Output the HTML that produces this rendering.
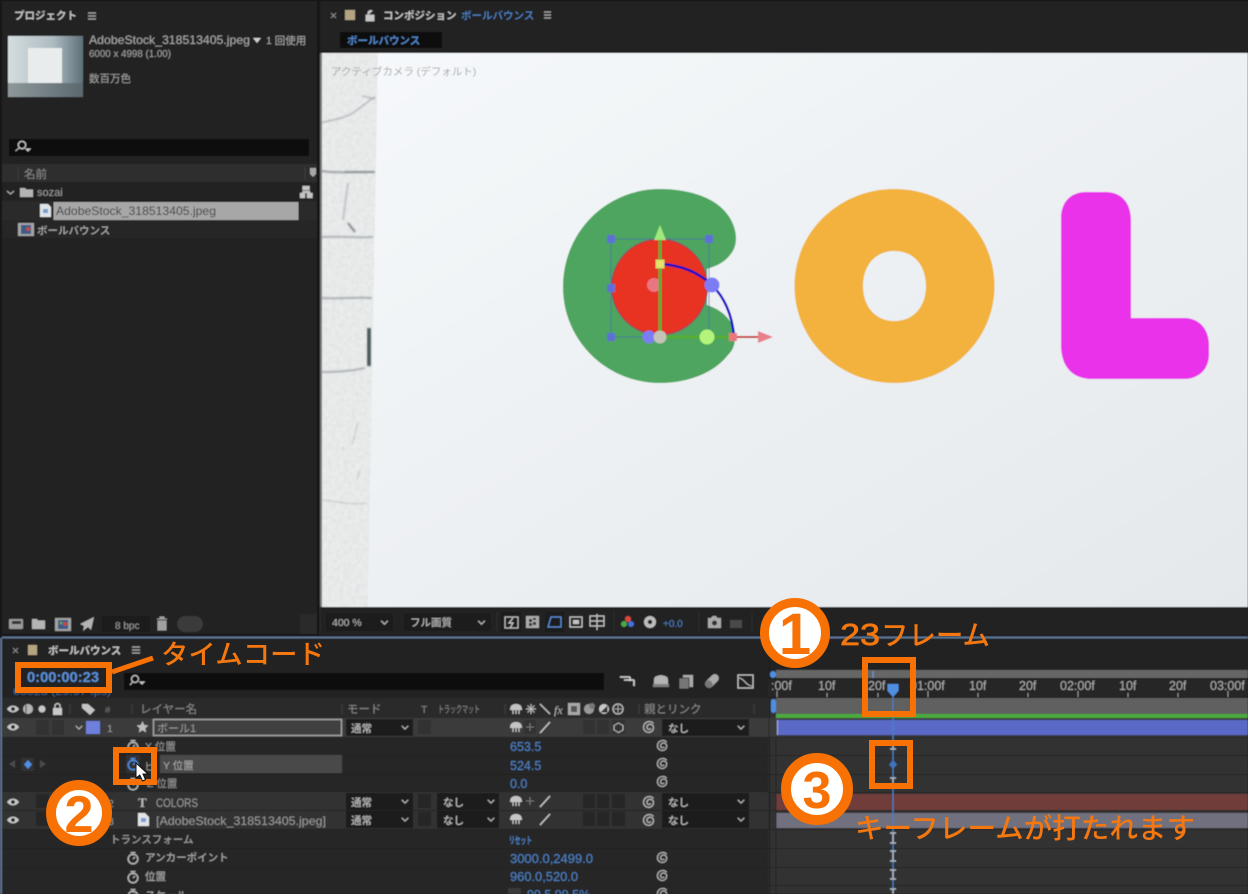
<!DOCTYPE html>
<html lang="ja"><head><meta charset="utf-8"><title>After Effects</title>
<style>
html,body{margin:0;padding:0;background:#1a1a1a;width:1248px;height:894px;overflow:hidden}
svg{display:block;position:absolute;left:0;top:0}
text{font-family:"Liberation Sans","Noto Sans CJK JP",sans-serif;fill:#9a9a9a;font-size:11px}
.j{font-size:10.5px}
.b{fill:#4f82c4}
.an{fill:#f4770f;font-weight:500;font-family:"Noto Sans CJK JP",sans-serif}
</style></head><body>
<svg width="1248" height="894" viewBox="0 0 1248 894" xmlns="http://www.w3.org/2000/svg">
<defs>
<filter id="bl" x="-2%" y="-2%" width="104%" height="104%"><feGaussianBlur stdDeviation="0.45"/></filter>
<filter id="bl2" x="-10%" y="-10%" width="120%" height="120%"><feGaussianBlur stdDeviation="0.8"/></filter>
<filter id="noise" x="0" y="0" width="100%" height="100%"><feTurbulence type="fractalNoise" baseFrequency="0.25" numOctaves="3" seed="4"/><feColorMatrix values="0 0 0 0 0.58 0 0 0 0 0.6 0 0 0 0 0.61 0 0 0 .6 -.16"/><feGaussianBlur stdDeviation="0.5"/></filter>
<linearGradient id="thumb" x1="0" x2="1" y1="0" y2="0"><stop offset="0" stop-color="#d5dde0"/><stop offset=".6" stop-color="#aebcc1"/><stop offset="1" stop-color="#5d7078"/></linearGradient>
<linearGradient id="floor" x1="0" x2="1" y1="0" y2="0"><stop offset="0" stop-color="#8f999c"/><stop offset="1" stop-color="#5a686e"/></linearGradient>
<linearGradient id="wall" x1="0" y1="0" x2="1" y2="1"><stop offset="0" stop-color="#f6f9fb"/><stop offset="1" stop-color="#e4e8eb"/></linearGradient>
<symbol id="eye" viewBox="0 0 12 8" overflow="visible"><path d="M0 4C3 -.5 9 -.5 12 4C9 8.500 3 8.500 0 4Z" fill="#c8c8c8"/><circle cx="6" cy="4" r="1.900" fill="#222"/></symbol>
<symbol id="sw" viewBox="0 0 14 16" overflow="visible"><circle cx="7" cy="9" r="4.800" fill="none" stroke="currentColor" stroke-width="1.500"/><path d="M4.500 2.500H9.500M7 3V5.500M7 9L9 7" fill="none" stroke="currentColor" stroke-width="1.300"/></symbol>
<symbol id="sp" viewBox="0 0 14 14" overflow="visible"><path d="M11.500 3.500C9 .5 3.500 1 1.800 5.500C.5 10 4.500 13.500 8.500 12C12 10.500 12.500 6 9.500 4.500C7 3.500 4.500 5.500 5 8C5.500 9.800 8 10 8.800 8.300" fill="none" stroke="#b4b4b4" stroke-width="1.300"/></symbol>
<symbol id="ch" viewBox="0 0 10 6" overflow="visible"><path d="M1 1L5 5L9 1" fill="none" stroke="#b8b8b8" stroke-width="1.400"/></symbol>
<symbol id="solo" viewBox="0 0 14 12" overflow="visible"><path d="M1 7C1 2 4 1 7 1C10 1 13 2 13 7Z" fill="#c4c4c4"/><path d="M7 1V7M4 7V11M10 7V11M7 7V11" stroke="#c4c4c4" stroke-width="1.300"/></symbol>
</defs>

<g filter="url(#bl)">
<rect width="1248" height="894" fill="#151515"/>
<!-- project panel -->
<rect x="2" y="1" width="315" height="613" fill="#232323"/>
<text x="14" y="19" class="j" style="fill:#c4c4c4;font-weight:700">プロジェクト</text>
<path d="M88 13H96M88 16H96M88 19H96" stroke="#a8a8a8" stroke-width="1.200"/>
<rect x="8" y="36" width="75" height="61" fill="url(#thumb)"/>
<rect x="8" y="83" width="75" height="14" fill="url(#floor)"/>
<rect x="28" y="48" width="34" height="35" fill="#e8ecec"/>
<text x="89" y="44" textLength="161" lengthAdjust="spacingAndGlyphs" style="font-size:12px;fill:#a8a8a8">AdobeStock_318513405.jpeg</text>
<path d="M253 38H261L257 43Z" fill="#cfcfcf"/>
<text x="266" y="44" style="font-size:10.500px;fill:#a8a8a8">1 回使用</text>
<text x="89" y="57" textLength="82" lengthAdjust="spacingAndGlyphs" style="font-size:10px;fill:#a0a0a0">6000 x 4998 (1.00)</text>
<text x="89" y="82" style="font-size:10.500px;fill:#a0a0a0">数百万色</text>
<rect x="9" y="139" width="300" height="17" fill="#111"/>
<circle cx="22" cy="145" r="3.700" fill="none" stroke="#c4c4c4" stroke-width="1.300"/><path d="M19 148L15.500 151M26 149H30L28 151Z" stroke="#c4c4c4" fill="#c4c4c4"/>
<rect x="2" y="164" width="315" height="18" fill="#2e2e2e"/>
<path d="M18 167V180M305 167V180" stroke="#3e3e3e"/>
<text x="24" y="178" style="font-size:11.500px;fill:#8a8a8a">名前</text>
<path d="M310 168H316V174L313 177L310 174Z" fill="#a8a8a8"/>
<path d="M7 191L10.500 194L14 191" fill="none" stroke="#a8a8a8" stroke-width="1.200"/>
<path d="M20 188H25L26.500 189.500H33V197H20Z" fill="#b4b4b4"/>
<text x="37" y="196" style="font-size:11px;fill:#999">sozai</text>
<path d="M306 186L309.500 186V190H302.500V186Z M300 193H305V198H300Z M307 193H312.500V198H307Z M306 190V193M302.500 193V191H310V193" fill="#c4c4c4" stroke="#c4c4c4" stroke-width=".4"/>
<rect x="2" y="201" width="315" height="19" fill="#2b2b2b"/>
<rect x="53" y="201.500" width="246" height="19" fill="#a7a7a7" stroke="#111"/>
<path d="M40 204H48L51 207V217H40Z" fill="#dfe4e8"/><rect x="43" y="209" width="5" height="4" fill="#7c9ccc"/>
<text x="56" y="215" textLength="160" lengthAdjust="spacingAndGlyphs" style="font-size:12px;fill:#3d3d3d">AdobeStock_318513405.jpeg</text>
<rect x="2" y="220" width="315" height="18" fill="#272727"/>
<rect x="18" y="223" width="16" height="13" fill="#a3a3a3"/><rect x="21" y="225" width="10" height="9" fill="#3d5a88"/><circle cx="28" cy="229" r="2" fill="#c84a3c"/>
<text x="37" y="234" class="j" style="fill:#a8a8a8;font-weight:500">ボールバウンス</text>

<!-- project toolbar -->
<rect x="2" y="614" width="315" height="20" fill="#232323"/>
<rect x="300" y="614" width="17" height="20" fill="#2a2a2a"/>
<rect x="9" y="619" width="14" height="10" rx="1" fill="#9a9a9a"/><rect x="12" y="621" width="9" height="3" fill="#333"/>
<path d="M32 619H37L38 620.500H45V629H32Z" fill="#b4b4b4"/>
<rect x="55" y="618" width="16" height="13" fill="#a3a3a3"/><rect x="58" y="620" width="10" height="9" fill="#3d5a88"/><circle cx="65" cy="624" r="2" fill="#c84a3c"/><circle cx="61" cy="623" r="1.500" fill="#5fa75b"/>
<path d="M94 617L80 624L84 626L83 631L88 627L91 630Z" fill="#b4b4b4"/>
<rect x="102" y="616" width="48" height="16" fill="#1d1d1d"/>
<text x="115" y="629" style="font-size:10px;fill:#9a9a9a">8 bpc</text>
<path d="M157 619H167M158 621H166V630H158ZM160 619V617H164V619" fill="#a0a0a0" stroke="#a0a0a0"/>
<rect x="177" y="616" width="26" height="16" rx="8" fill="#3a3a3a"/>

<!-- comp header -->
<rect x="320" y="1" width="928" height="51" fill="#232323"/>
<path d="M331 13L336 18M336 13L331 18" stroke="#888" stroke-width="1.100"/>
<rect x="345" y="10" width="10" height="10" fill="#b5a482"/>
<path d="M366 15H374V21H366ZM368 15V12Q370 9.500 372.500 11" fill="#c8c8c8" stroke="#c8c8c8" stroke-width=".8"/>
<text x="383" y="19" class="j" style="fill:#c4c4c4;font-weight:700">コンポジション</text>
<text x="461" y="19" class="j b" style="font-weight:500">ボールバウンス</text>
<path d="M544 12H551M544 15H551M544 18H551" stroke="#a8a8a8" stroke-width="1.200"/>
<rect x="340" y="32" width="102" height="16" fill="#111"/>
<text x="347" y="44" class="j b" style="font-weight:700">ボールバウンス</text>

<!-- viewer -->
<rect x="320" y="53" width="928" height="554" fill="url(#wall)"/>
<path d="M321 53H378L368 607H321Z" fill="#eceeee"/>
<path d="M321 53H378V60L368 607H321Z" filter="url(#noise)" clip-path="polygon(0 0,100% 0,82% 100%,0 100%)"/>
<g fill="none" stroke="#6f797b" filter="url(#bl2)">
<path d="M320 123C332 120 345 118 353 113C360 108 368 101 375 97M362 96L375 99" stroke-width="1.100" opacity=".6"/>
<path d="M321 171C335 173 345 172 375 172" stroke-width="2" opacity=".65"/>
<path d="M345 172H374" stroke-width="2" opacity=".55"/>
<path d="M348 183L343 220" stroke-width="2" opacity=".35"/>
<path d="M348 223L355 232" stroke-width="2.200" opacity=".85"/>
<path d="M321 237C340 236 355 238 373 237" stroke-width="1.800" opacity=".55"/>
<path d="M321 298C340 299 355 297 372 298" stroke-width="1.800" opacity=".6"/>
<path d="M320 372C340 372 352 371 365 368" stroke-width="1.500" opacity=".65"/>
<path d="M358 422L352 445M342 447L344 449M360 470L357 480M322 500C340 502 350 505 367 503" stroke-width="1" opacity=".35"/>
</g>
<rect x="367" y="328" width="4" height="38" fill="#4a585c" filter="url(#bl2)"/>
<rect x="320" y="53" width="2" height="554" fill="#7a7a7a"/>
<text x="331" y="75" class="j" style="fill:#a6a6a6">アクティブカメラ (デフォルト)</text>

<!-- letters -->
<path d="M660 189C690 189 718 198 730 218C738 232 738 246 730 255C724 263 716 266 707 269L707 305C720 309 735 320 735 337C735 345 733 350 728 355C714 373 688 383 660 383C606 383 563 340 563 287C563 232 606 189 660 189Z" fill="#4ea55e"/>
<path fill-rule="evenodd" d="M894.500 189C950 189 994.500 232 994.500 286C994.500 340 950 383 894.500 383C839 383 794.500 340 794.500 286C794.500 232 839 189 894.500 189ZM894.500 251C874 251 863 267 863 286C863 305 874 321 894.500 321C915 321 926 305 926 286C926 267 915 251 894.500 251Z" fill="#f2b23e"/>
<path d="M1086 192H1105C1122 192 1131 203 1131 221V318H1184C1200 318 1209 330 1209 345V354C1209 370 1198 379 1184 379H1092C1072 379 1061 366 1061 345V218C1061 203 1070 192 1086 192Z" fill="#e932ea"/>

<!-- ball + handles -->
<circle cx="659.500" cy="287" r="48" fill="#e83022" stroke="#8a4a6a" stroke-width="1"/>
<rect x="611" y="239" width="98" height="98" fill="none" stroke="#4a70a8" stroke-width="1" opacity=".75"/>
<g fill="#5d6fd4"><rect x="607" y="235" width="8" height="8"/><rect x="705" y="235" width="8" height="8"/><rect x="607" y="284" width="8" height="8"/><rect x="607" y="333" width="8" height="8"/></g>
<circle cx="654" cy="285" r="7" fill="#ea7682"/>
<path d="M660 264C680 265 698 272 712 285C725 298 732 315 734 336" fill="none" stroke="#0d0dc4" stroke-width="2.500"/>
<path d="M660 237V337H732" fill="none" stroke="#57ad34" stroke-width="3"/>
<path d="M660 225L654 240H666Z" fill="#9fe87e"/>
<rect x="656" y="260" width="8" height="8" fill="#e9e06a" stroke="#c3d468"/>
<circle cx="712" cy="285" r="7.500" fill="#7c7cf5"/>
<circle cx="649" cy="337" r="6.500" fill="#7c7cf5"/>
<circle cx="660" cy="337" r="6.500" fill="#c3c3b8"/>
<circle cx="707" cy="337" r="7.500" fill="#b4f47c"/>
<rect x="729" y="333" width="8" height="8" fill="#e8787e"/>
<path d="M737 337H759" stroke="#c8302c" stroke-width="2"/>
<path d="M758 331L773 337L758 343Z" fill="#e8808a"/>

<!-- comp toolbar -->
<rect x="320" y="607" width="928" height="28" fill="#232323"/>
<rect x="326" y="613" width="67" height="18" rx="2" fill="#1d1d1d"/>
<text x="332" y="626" style="font-size:10.500px;fill:#b4b4b4">400 %</text>
<use href="#ch" x="380" y="620" width="9" height="5"/>
<rect x="404" y="613" width="87" height="18" rx="2" fill="#1d1d1d"/>
<text x="410" y="626" class="j" style="fill:#b4b4b4;font-weight:500">フル画質</text>
<use href="#ch" x="477" y="620" width="9" height="5"/>
<rect x="501" y="612" width="20" height="20" fill="#1b1b1b"/>
<rect x="505" y="617" width="13" height="11" fill="none" stroke="#bbb" stroke-width="1.300"/><path d="M513 618L509 623H513L510 628" fill="none" stroke="#ccc" stroke-width="1.200"/>
<rect x="526" y="616" width="13" height="12" fill="#aaa"/><path d="M529 619H532V622H529ZM533 622H536V625H533ZM533 618H536V620H533ZM529 623H532V626H529Z" fill="#333"/>
<rect x="545" y="612" width="19" height="20" fill="#1b1b1b"/>
<path d="M551 617H561V627H548Z" fill="none" stroke="#5b8fd8" stroke-width="1.300"/>
<rect x="570" y="617" width="12" height="10" fill="none" stroke="#c4c4c4" stroke-width="1.300"/><rect x="573" y="620" width="6" height="4" fill="#c4c4c4"/>
<path d="M590 616H604V626H590ZM597 614V630M590 621H604" fill="none" stroke="#c4c4c4" stroke-width="1.200"/>
<circle cx="628" cy="619" r="3" fill="#d84a3a"/><circle cx="624" cy="624" r="3" fill="#4aa84a"/><circle cx="631" cy="624" r="3" fill="#3f6fd8"/>
<circle cx="650" cy="622" r="6" fill="#bdbdbd"/><circle cx="650" cy="622" r="2.200" fill="#222"/>
<text x="663" y="627" style="font-size:10px" class="b">+0.0</text>
<path d="M708 618H711L712.500 616H716L717.500 618H721V628H708Z" fill="#a8a8a8"/><circle cx="714.500" cy="623" r="2.500" fill="#333"/>
<path d="M730 620H742V628H730Z" fill="#4a4a4a"/>
<path d="M320 607V634M497 612V632M614 612V632M699 612V632M752 612V632" stroke="#2e2e2e"/>

<!-- timeline panel -->
<rect x="2" y="636.500" width="1246" height="2" fill="#5d7493"/>
<rect x="2" y="639" width="1246" height="255" fill="#232323"/>
<path d="M13 648L18 653M18 648L13 653" stroke="#888" stroke-width="1.100"/>
<rect x="28" y="645" width="9" height="10" fill="#b5a482"/>
<text x="48" y="654" class="j" style="fill:#c4c4c4;font-weight:700">ボールバウンス</text>
<path d="M132 647H140M132 650H140M132 653H140" stroke="#a8a8a8" stroke-width="1.200"/>
<text x="27" y="682" textLength="72" lengthAdjust="spacingAndGlyphs" style="font-size:14.500px;font-weight:700;fill:#5a90d8">0:00:00:23</text>
<text x="13" y="695" textLength="98" lengthAdjust="spacingAndGlyphs" style="font-size:10.500px;fill:#3f6294">00023 (29.97 fps)</text>
<rect x="124" y="673" width="480" height="17" fill="#111"/>
<circle cx="135" cy="679" r="3.500" fill="none" stroke="#c4c4c4" stroke-width="1.200"/><path d="M132.500 682L130 685M140 682H144L142 684Z" stroke="#c4c4c4" fill="#c4c4c4"/>
<path d="M620 677H630M630 677V681M624 680H634M634 680V686" stroke="#d4d4d4" stroke-width="1.600" fill="none"/>
<path d="M654 685V680C654 676 657 676 661 675C665 676 668 676 668 680V685Z" fill="#b4b4b4"/><rect x="653" y="684" width="16" height="3" fill="#7e7e7e"/>
<rect x="683" y="675" width="10" height="12" fill="#aaa"/><rect x="679" y="678" width="10" height="11" fill="#777" stroke="#222" stroke-width=".8"/>
<g transform="rotate(-45 712 681)"><rect x="704" y="677" width="16" height="8" rx="4" fill="#aaa"/><rect x="704" y="677" width="7" height="8" rx="3.500" fill="#777"/></g>
<rect x="738" y="675" width="15" height="13" fill="none" stroke="#c4c4c4" stroke-width="1.300"/><path d="M739 678C744 678 746 686 752 686" fill="none" stroke="#c4c4c4"/>

<!-- column header -->
<rect x="2" y="698" width="768" height="20" fill="#2b2b2b"/>
<use href="#eye" x="7" y="705" width="12" height="8"/>
<circle cx="28" cy="709" r="5" fill="#b4b4b4"/><path d="M26 705V713" stroke="#2b2b2b"/>
<circle cx="42" cy="709" r="3.500" fill="#c8c8c8"/>
<rect x="53" y="708" width="9" height="7" fill="#c8c8c8"/><path d="M55 708V705Q57.500 702 60 705V708" fill="none" stroke="#c8c8c8" stroke-width="1.300"/>
<path d="M82 704H88L95 710L90 715L82 708Z" fill="#c4c4c4"/>
<text x="105" y="713" style="font-size:9.500px;fill:#777">#</text>
<path d="M70 704V714M132 704V714M342 704V714M505 704V714M639 704V714M754 704V714" stroke="#3f3f3f"/>
<text x="140" y="713" style="font-size:11.500px;fill:#888">レイヤー名</text>
<text x="347" y="713" style="font-size:11.500px;fill:#888">モード</text>
<text x="421" y="713" style="font-size:10.500px;fill:#888">T</text>
<text x="438" y="713" textLength="42" lengthAdjust="spacingAndGlyphs" style="font-size:10px;fill:#888">トラックマット</text>
<use href="#solo" x="509" y="703" width="14" height="12"/>
<path d="M526 709H536M531 704V714M527.500 705.500L534.500 712.500M534.500 705.500L527.500 712.500" stroke="#bbb"/>
<path d="M540 704L550 714" stroke="#bbb" stroke-width="1.500"/>
<text x="554" y="714" style="font-size:12px;font-style:italic;fill:#b4b4b4;font-family:'Liberation Serif',serif">fx</text>
<rect x="568" y="703" width="12" height="12" fill="#a8a8a8"/><rect x="571" y="706" width="6" height="6" fill="#555"/>
<circle cx="589" cy="709" r="5" fill="#999"/><circle cx="592" cy="706" r="3" fill="#777"/>
<circle cx="604" cy="709" r="5" fill="#c8c8c8"/><path d="M600.500 712.500L607.500 705.500V712.500Z" fill="#333"/>
<circle cx="618" cy="709" r="5" fill="none" stroke="#bbb" stroke-width="1.300"/><path d="M614 709H622M618 705V713" stroke="#bbb" stroke-width=".8"/>
<text x="644" y="713" style="font-size:11.500px;fill:#888">親とリンク</text>

<!-- rows left -->
<rect x="2" y="718" width="768" height="19" fill="#3a3a3a"/>
<g fill="#262626">
<rect x="2" y="737" width="768" height="18"/><rect x="2" y="756" width="768" height="18"/><rect x="2" y="775" width="768" height="17"/>
<rect x="2" y="830" width="768" height="18"/><rect x="2" y="849" width="768" height="18"/><rect x="2" y="868" width="768" height="26"/>
</g>
<rect x="2" y="792" width="768" height="18" fill="#303030"/>
<rect x="2" y="811" width="768" height="18" fill="#303030"/>
<rect x="0" y="638" width="2" height="256" fill="#5d7493"/>
<!-- row 1 -->
<use href="#eye" x="7" y="723" width="12" height="8"/>
<rect x="36" y="720" width="13" height="15" fill="#333"/><rect x="52" y="720" width="12" height="15" fill="#333"/>
<use href="#ch" x="75" y="725" width="8" height="5"/>
<rect x="86" y="721" width="14" height="13" fill="#6e7fdc"/>
<text x="107" y="732" style="font-size:10.500px;fill:#999">1</text>
<path d="M142.500 721L144.200 725L148.500 725.400L145.300 728.200L146.200 732.500L142.500 730.300L138.800 732.500L139.700 728.200L136.500 725.400L140.800 725Z" fill="#bdbdbd"/>
<rect x="153.500" y="719.500" width="188" height="16" fill="#3f3f3f" stroke="#a4a4a4" stroke-width="1.500"/>
<text x="157" y="732" class="j" style="fill:#999;font-size:11px">ボール1</text>
<rect x="346" y="719" width="67" height="17" fill="#1d1d1d"/>
<text x="351" y="732" class="j" style="fill:#bbb;font-weight:500">通常</text>
<use href="#ch" x="401" y="725" width="8" height="5"/>
<rect x="418" y="720" width="13" height="14" fill="#333"/>
<use href="#solo" x="509" y="721" width="14" height="12"/>
<rect x="524" y="720" width="12" height="14" fill="#333"/>
<path d="M526 727H534M530 723V731" stroke="#777"/>
<path d="M540 733L550 722" stroke="#c8c8c8" stroke-width="1.400"/>
<rect x="583" y="720" width="12" height="14" fill="#333"/><rect x="597" y="720" width="12" height="14" fill="#333"/>
<rect x="612" y="720" width="13" height="14" fill="#333"/>
<path d="M618.500 723L623 725.500V730L618.500 732.500L614 730V725.500Z" fill="none" stroke="#bbb"/>
<use href="#sp" x="642" y="720" width="14" height="14"/>
<rect x="662" y="719" width="87" height="17" fill="#1d1d1d"/>
<text x="668" y="732" class="j" style="fill:#bbb;font-weight:500">なし</text>
<use href="#ch" x="737" y="725" width="8" height="5"/>
<!-- sub rows -->
<use href="#sw" x="126" y="738" width="14" height="16" color="#b4b4b4"/>
<text x="145" y="750" class="j" style="fill:#999">X 位置</text>
<text x="510" y="751" style="font-size:12.500px" class="b">653.5</text>
<use href="#sp" x="656" y="739" width="13" height="13"/>
<path d="M9 764L15 760V768ZM46 764L40 760V768Z" fill="#4a4a4a"/>
<rect x="21" y="758" width="13" height="13" fill="#333"/><path d="M28 760L32 764.500L28 769L24 764.500Z" fill="#4f8ee0"/>
<rect x="126" y="755" width="14" height="18" fill="#333"/>
<use href="#sw" x="126" y="756" width="14" height="16" color="#4f8ee0"/>
<text x="144" y="770" class="j" style="fill:#999">ヒ</text>
<rect x="160" y="755" width="182" height="18" fill="#484848"/>
<text x="163" y="769" class="j" style="fill:#aaa">Y 位置</text>
<text x="510" y="770" style="font-size:12.500px" class="b">524.5</text>
<use href="#sp" x="656" y="757" width="13" height="13"/>
<use href="#sw" x="126" y="776" width="14" height="16" color="#b4b4b4"/>
<text x="147" y="787" class="j" style="fill:#999">Z 位置</text>
<text x="510" y="788" style="font-size:12.500px" class="b">0.0</text>
<use href="#sp" x="656" y="775" width="13" height="13"/>
<!-- row 2 -->
<use href="#eye" x="7" y="798" width="12" height="8"/>
<rect x="36" y="794" width="13" height="14" fill="#262626"/><rect x="52" y="794" width="12" height="14" fill="#262626"/>
<text x="108" y="807" style="font-size:10.500px;fill:#999">2</text>
<text x="138" y="807" style="font-size:13px;font-weight:700;fill:#bbb;font-family:'Liberation Serif',serif">T</text>
<text x="156" y="807" textLength="42" lengthAdjust="spacingAndGlyphs" style="font-size:11.500px;fill:#999">COLORS</text>
<rect x="346" y="793" width="67" height="17" fill="#1d1d1d"/>
<text x="351" y="806" class="j" style="fill:#bbb;font-weight:500">通常</text>
<use href="#ch" x="401" y="799" width="8" height="5"/>
<rect x="418" y="794" width="13" height="14" fill="#262626"/>
<rect x="437" y="793" width="62" height="17" fill="#1d1d1d"/>
<text x="443" y="806" class="j" style="fill:#bbb;font-weight:500">なし</text>
<use href="#ch" x="487" y="799" width="8" height="5"/>
<use href="#solo" x="509" y="795" width="14" height="12"/>
<path d="M526 801H534M530 797V805" stroke="#777"/>
<path d="M540 807L550 796" stroke="#c8c8c8" stroke-width="1.400"/>
<rect x="583" y="794" width="12" height="14" fill="#282828"/><rect x="597" y="794" width="12" height="14" fill="#282828"/><rect x="612" y="794" width="13" height="14" fill="#282828"/>
<use href="#sp" x="642" y="795" width="14" height="14"/>
<rect x="662" y="793" width="87" height="17" fill="#1d1d1d"/>
<text x="668" y="806" class="j" style="fill:#bbb;font-weight:500">なし</text>
<use href="#ch" x="737" y="799" width="8" height="5"/>
<!-- row 3 -->
<use href="#eye" x="7" y="816" width="12" height="8"/>
<rect x="36" y="812" width="13" height="14" fill="#262626"/>
<text x="108" y="825" style="font-size:10.500px;fill:#999">3</text>
<path d="M138 813H145L149 817V826H138Z" fill="#dfe4e8"/><rect x="141" y="818" width="5" height="4" fill="#7c9ccc"/>
<text x="156" y="825" textLength="170" lengthAdjust="spacingAndGlyphs" style="font-size:12px;fill:#999">[AdobeStock_318513405.jpeg]</text>
<rect x="346" y="811" width="67" height="17" fill="#1d1d1d"/>
<text x="351" y="824" class="j" style="fill:#bbb;font-weight:500">通常</text>
<use href="#ch" x="401" y="817" width="8" height="5"/>
<rect x="418" y="812" width="13" height="14" fill="#262626"/>
<rect x="437" y="811" width="62" height="17" fill="#1d1d1d"/>
<text x="443" y="824" class="j" style="fill:#bbb;font-weight:500">なし</text>
<use href="#ch" x="487" y="817" width="8" height="5"/>
<use href="#solo" x="509" y="813" width="14" height="12"/>
<path d="M540 825L550 814" stroke="#c8c8c8" stroke-width="1.400"/>
<rect x="583" y="812" width="12" height="14" fill="#282828"/><rect x="597" y="812" width="12" height="14" fill="#282828"/><rect x="612" y="812" width="13" height="14" fill="#282828"/>
<use href="#sp" x="642" y="813" width="14" height="14"/>
<rect x="662" y="811" width="87" height="17" fill="#1d1d1d"/>
<text x="668" y="824" class="j" style="fill:#bbb;font-weight:500">なし</text>
<use href="#ch" x="737" y="817" width="8" height="5"/>
<!-- transform -->
<text x="110" y="843" class="j" style="fill:#999;font-weight:500">トランスフォーム</text>
<text x="509" y="844" textLength="23" lengthAdjust="spacingAndGlyphs" class="b" style="font-size:10px;font-weight:700">リセット</text>
<use href="#sw" x="126" y="850" width="14" height="16" color="#b4b4b4"/>
<text x="145" y="861" class="j" style="fill:#a4a4a4;font-weight:500">アンカーポイント</text>
<text x="510" y="863" textLength="83" lengthAdjust="spacingAndGlyphs" style="font-size:13px" class="b">3000.0,2499.0</text>
<use href="#sp" x="656" y="851" width="13" height="13"/>
<use href="#sw" x="126" y="869" width="14" height="16" color="#b4b4b4"/>
<text x="145" y="880" class="j" style="fill:#a4a4a4;font-weight:500">位置</text>
<text x="510" y="881" textLength="68" lengthAdjust="spacingAndGlyphs" style="font-size:13px" class="b">960.0,520.0</text>
<use href="#sp" x="656" y="869" width="13" height="13"/>
<use href="#sw" x="126" y="887" width="14" height="16" color="#b4b4b4"/>
<text x="145" y="899" class="j" style="fill:#a4a4a4;font-weight:500">スケール</text>
<rect x="508" y="888" width="13" height="6" fill="#3a3a3a"/>
<text x="527" y="899" style="font-size:12.500px" class="b">99.5,99.5%</text>
<use href="#sp" x="656" y="887" width="13" height="13"/>

<!-- timeline right -->
<rect x="768" y="698" width="480" height="196" fill="#333"/>
<rect x="769" y="639" width="1" height="255" fill="#1a1a1a"/>
<rect x="776" y="670" width="472" height="8" fill="#666"/>
<rect x="770" y="671" width="6" height="7" rx="3" fill="#4f8ee0"/>
<rect x="872" y="671" width="2" height="7" fill="#6a8ab4"/>
<rect x="768" y="679" width="480" height="18" fill="#282828"/>
<path d="M770 678.500H1248M770 697.500H1248" stroke="#141414"/>
<g>
<text x="771" y="690" style="font-size:12.500px;fill:#aaa">:00f</text><text x="818" y="690" style="font-size:12.500px;fill:#aaa">10f</text><text x="868" y="690" style="font-size:12.500px;fill:#aaa">20f</text><text x="910" y="690" style="font-size:12.500px;fill:#aaa">01:00f</text><text x="969" y="690" style="font-size:12.500px;fill:#aaa">10f</text><text x="1019" y="690" style="font-size:12.500px;fill:#aaa">20f</text><text x="1060" y="690" style="font-size:12.500px;fill:#aaa">02:00f</text><text x="1119" y="690" style="font-size:12.500px;fill:#aaa">10f</text><text x="1169" y="690" style="font-size:12.500px;fill:#aaa">20f</text><text x="1210" y="690" style="font-size:12.500px;fill:#aaa">03:00f</text>
</g>
<path d="M777 691V697M827 693V697M878 693V697M928 691V697M978 693V697M1028 693V697M1078 691V697M1128 693V697M1178 693V697M1228 691V697" stroke="#999"/>
<rect x="776" y="698" width="472" height="16" fill="#606060"/>
<rect x="771" y="699" width="5" height="14" rx="2.500" fill="#4f8ee0"/>
<rect x="776" y="714" width="472" height="4" fill="#4caa3c"/>
<rect x="768" y="718" width="480" height="19" fill="#3a3a3a"/>
<rect x="777" y="720" width="471" height="15" fill="#5a69c6"/>
<rect x="777" y="720" width="1" height="15" fill="#aab3e8"/>
<path d="M768 737.500H1248M768 755.500H1248M768 774.500H1248M768 792.500H1248M768 810.500H1248M768 829.500H1248M768 848.500H1248M768 867.500H1248M768 885.500H1248" stroke="#282828"/>
<rect x="776" y="794" width="472" height="16" fill="#6f3d3a"/>
<rect x="776" y="813" width="472" height="15" fill="#70707f"/>
<path d="M769 698V894M776 737V894" stroke="#262626"/>
<path d="M893 694V894" stroke="#4a7fc8" stroke-width="1.300"/>
<path d="M887.500 684H898.500V691L893 697L887.500 691Z" fill="#4f8ee0"/>
<g stroke="#b0b8c4" stroke-width="1.500"><path d="M890 749H896M893 744V749"/><path d="M890 778H896M893 778V783"/>
<path d="M890 833H896M890 843H896M893 833V843M890 851H896M890 861H896M893 851V861M890 870H896M890 879H896M893 870V879M890 889H896M893 889V894"/></g>
<path d="M893 760L897 764.500L893 769L889 764.500Z" fill="#3f74bf"/>
</g>

<!-- annotations -->
<g fill="none" stroke="#f87104" stroke-width="6">
<rect x="18" y="665" width="91" height="25"/>
<rect x="116" y="750" width="38" height="32"/>
<rect x="865" y="660" width="48" height="54"/>
<rect x="872" y="743" width="38" height="43"/>
</g>
<path d="M112 672L153 658" fill="none" stroke="#f87104" stroke-width="5"/>
<path d="M136 763V778L139.800 775L142.500 781L145.500 779.700L143 774H148Z" fill="#fff" stroke="#111" stroke-width="1"/>
<text x="161" y="664" textLength="164" lengthAdjust="spacingAndGlyphs" class="an" style="font-size:27px">タイムコード</text>
<text x="840" y="645" textLength="40" lengthAdjust="spacingAndGlyphs" style="font-size:31px;fill:#f4770f;stroke:#f4770f;stroke-width:.7;font-family:'Liberation Sans',sans-serif">23</text>
<text x="881" y="645" textLength="109" lengthAdjust="spacingAndGlyphs" class="an" style="font-size:28px">フレーム</text>
<text x="855" y="838" textLength="340" lengthAdjust="spacingAndGlyphs" class="an" style="font-size:28px">キーフレームが打たれます</text>
<circle cx="795" cy="633" r="30.500" fill="#fff" stroke="#f87104" stroke-width="9"/>
<text x="795" y="654" text-anchor="middle" style="font-size:58px;font-weight:700;fill:#f87104">1</text>
<circle cx="79" cy="813" r="28" fill="#fff" stroke="#f87104" stroke-width="10"/>
<text x="79" y="832" text-anchor="middle" style="font-size:52px;font-weight:700;fill:#f87104">2</text>
<circle cx="817" cy="789" r="31" fill="#fff" stroke="#f87104" stroke-width="10"/>
<text x="817" y="808" text-anchor="middle" style="font-size:52px;font-weight:700;fill:#f87104">3</text>
</svg>
</body></html>
